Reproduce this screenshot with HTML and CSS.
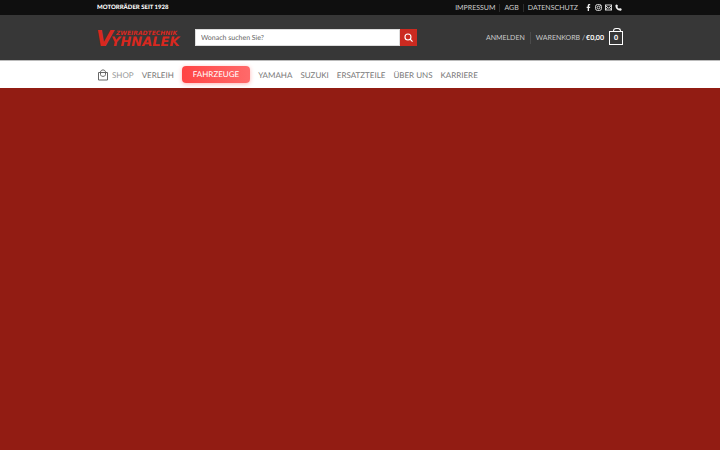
FILE: index.html
```html
<!DOCTYPE html>
<html lang="de">
<head>
    <meta charset="UTF-8">
    <meta name="viewport" content="width=device-width, initial-scale=1">
    <title>Zweiradtechnik Vyhnalek</title>
    <link rel="stylesheet" href="styles.css">
</head>
<body>
<header>
    <div class="top-bar">
        <div class="container">
            <strong class="slogan">MOTORRÄDER SEIT 1928</strong>
            <ul class="top-links">
                <li><a href="#">IMPRESSUM</a></li>
                <li><a href="#">AGB</a></li>
                <li><a href="#">DATENSCHUTZ</a></li>
            </ul>
            <div class="social">
                <a href="#" aria-label="Facebook"><svg viewBox="0 0 12 12"><path d="M4.6 12V6.8H2.8V4.6h1.8V3c0-1.9 1-2.9 2.800-2.900.8 0 1.500.1 1.500.1v1.900H8c-.9 0-1.100.5-1.100 1.100v1.400h2.100l-.4 2.200H6.900V12z" fill="currentColor"/></svg></a>
                <a href="#" aria-label="Instagram"><svg viewBox="0 0 12 12" fill="none" stroke="currentColor" stroke-width="1.5"><rect x="1" y="1" width="10" height="10" rx="3"/><circle cx="6" cy="6" r="2.4"/><circle cx="9" cy="3" r=".4"/></svg></a>
                <a href="#" aria-label="E-Mail"><svg viewBox="0 0 12 12" fill="none" stroke="currentColor" stroke-width="1.5"><rect x=".7" y="1.7" width="10.6" height="8.6"/><path d="M1 3l5 4 5-4M1 10l3.400-4M11 10L7.600 6"/></svg></a>
                <a href="#" aria-label="Telefon"><svg viewBox="0 0 12 12"><path d="M3.300.8L.8 1.600C0 7 5 12 10.400 11.400l1.300-2.700-3.200-2-1.500 1.400C5.600 7.600 4.500 6.400 3.900 4.900l1.500-1.400z" fill="currentColor"/></svg></a>
            </div>
        </div>
    </div>

    <div class="main-bar">
        <div class="container">
            <a class="logo" href="#" aria-label="Zweiradtechnik Vyhnalek">
                <svg viewBox="0 0 84 18">
                    <text class="logo-initial" x="-1" y="17">V</text>
                    <text class="logo-small" x="19" y="6">ZWEIRADTECHNIK</text>
                    <text class="logo-big" x="14" y="17">YHNALEK</text>
                </svg>
            </a>
            <form class="search">
                <input type="search" placeholder="Wonach suchen Sie?" aria-label="Suche">
                <button type="submit" aria-label="Suchen"><svg viewBox="0 0 12 12" fill="none" stroke="currentColor" stroke-width="1.5"><circle cx="5.3" cy="5.3" r="4"/><path d="M8 8l3.400 3.400"/></svg></button>
            </form>
            <div class="account">
                <a class="login" href="#">ANMELDEN</a>
                <a class="cart" href="#">WARENKORB / <b>€0,00</b>
                    <span class="bag">0</span>
                </a>
            </div>
        </div>
    </div>

    <nav class="main-nav">
        <ul class="container">
            <li><a class="shop" href="#"><svg viewBox="0 0 12 12" fill="none" stroke="currentColor"><path d="M1.500 3.500h9v7.500h-9z" stroke-linejoin="round"/><path d="M3.500 5.500V3.200C3.500.2 8.500.2 8.500 3.200v2.300M3.500 5.500c0 2.500 5 2.500 5 0"/></svg>SHOP</a></li>
            <li><a href="#">VERLEIH</a></li>
            <li><a class="highlight" href="#">FAHRZEUGE</a></li>
            <li><a href="#">YAMAHA</a></li>
            <li><a href="#">SUZUKI</a></li>
            <li><a href="#">ERSATZTEILE</a></li>
            <li><a href="#">ÜBER UNS</a></li>
            <li><a href="#">KARRIERE</a></li>
        </ul>
    </nav>
</header>
<main></main>
</body>
</html>
```
FILE: styles.css
```css
* {
    box-sizing: border-box;
    margin: 0;
    padding: 0;
}

body {
    display: flex;
    flex-direction: column;
    min-height: 100vh;
    font-family: Lato, sans-serif;
    font-size: 7px;
    text-rendering: geometricPrecision;
    background-color: #fff;
}

a {
    color: inherit;
    text-decoration: none;
}

ul {
    list-style: none;
}

svg {
    display: block;
}

.container {
    display: flex;
    align-items: center;
    width: 100%;
    max-width: 526px;
    margin: 0 auto;
}

.top-bar {
    background-color: #0f0f0f;
    color: #ccc;
}

.top-bar .container {
    height: 15px;
}

.slogan {
    margin-right: auto;
    color: #fff;
    font-size: 6px;
    font-weight: 900;
}

.top-links {
    display: flex;
}

.top-links li + li {
    margin-left: 4px;
    padding-left: 4px;
    border-left: 1px solid #2c2c2c;
}

.social {
    display: flex;
    gap: 3px;
    margin: 0 1px 0 7px;
    color: #eee;
}

.social svg {
    width: 7px;
    height: 7px;
}

.main-bar {
    background-color: #373737;
}

.main-bar .container {
    height: 45px;
}

.logo {
    width: 84px;
    margin-right: 14px;
}

.logo svg {
    width: 84px;
    height: 18px;
    overflow: visible;
    fill: #d8281f;
    font-family: "DejaVu Sans", sans-serif;
    font-style: italic;
    font-weight: bold;
}

.logo-initial {
    font-size: 22px;
}

.logo-small {
    font-size: 6px;
}

.logo-big {
    font-size: 13px;
}

.search {
    display: flex;
    width: 222px;
    height: 17px;
}

.search input {
    flex: 1;
    min-width: 0;
    padding: 0 5px;
    border: 1px solid #ddd;
    border-radius: 0;
    font: inherit;
    text-rendering: inherit;
    background-color: #fff;
    color: #333;
}

.search input::placeholder {
    color: #666;
}

.search button {
    display: flex;
    align-items: center;
    justify-content: center;
    width: 17px;
    border: 0;
    background-color: #cb2a20;
    color: #fff;
}

.search button svg {
    width: 9px;
    height: 9px;
}

.account {
    display: flex;
    align-items: center;
    margin-left: auto;
    color: #ccc;
}

.login {
    padding-right: 5px;
    border-right: 1px solid #4b4b4b;
    line-height: 12px;
}

.cart {
    display: flex;
    align-items: center;
    gap: 1px;
    margin-left: 5px;
}

.cart b {
    color: #fff;
}

.bag {
    position: relative;
    width: 14px;
    height: 14px;
    margin-left: 4px;
    border: 1px solid #fff;
    color: #fff;
    font-weight: 900;
    line-height: 12px;
    text-align: center;
}

.bag::before {
    content: "";
    position: absolute;
    top: -4px;
    left: 3px;
    width: 6px;
    height: 3px;
    border: 1px solid #fff;
    border-bottom: 0;
    border-radius: 3px 3px 0 0;
}

.main-nav {
    border-top: 1px solid #bbb;
    background-color: #fff;
    color: #777;
    font-size: 8px;
}

.main-nav .container {
    gap: 8px;
    height: 27px;
}

.shop {
    display: flex;
    align-items: center;
    gap: 3px;
    color: #999;
}

.shop svg {
    width: 12px;
    height: 12px;
    color: #666;
}

.highlight {
    display: block;
    padding: 0 11px;
    border-radius: 4px;
    background: linear-gradient(90deg, #ff4444, #ff6a6a);
    box-shadow: 0 1px 4px rgba(255, 70, 70, .4);
    color: #fff;
    line-height: 17px;
}

main {
    flex: 1;
    background-color: #921c13;
}
```
